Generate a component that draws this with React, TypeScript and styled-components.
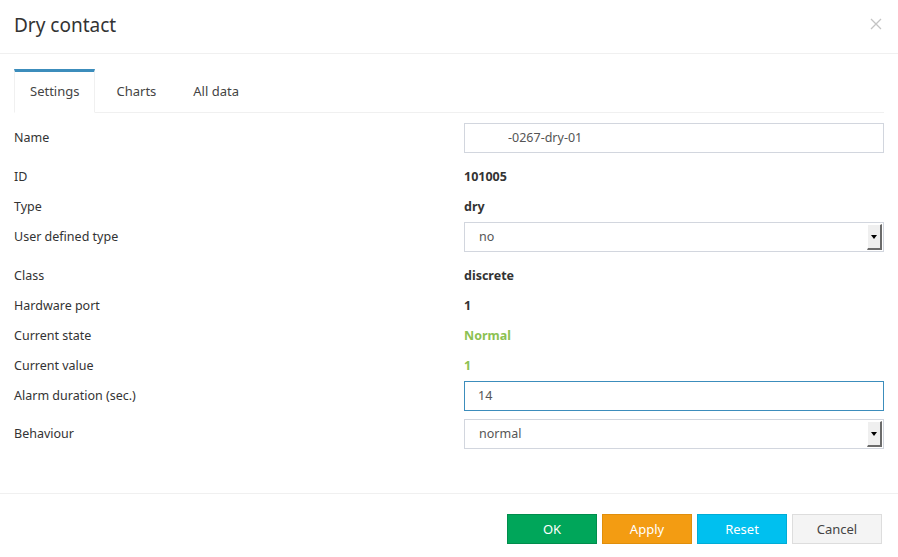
import React from "react";
import styled, { createGlobalStyle } from "styled-components";

const Global = createGlobalStyle`
  html, body { margin: 0; padding: 0; background: #ffffff; }
  body { font-family: "Noto Sans", "Open Sans", sans-serif; color: #333333; }
  * { box-sizing: border-box; }
`;

const Modal = styled.div`
  width: 898px;
  height: 557px;
  background: #ffffff;
  display: flex;
  flex-direction: column;
`;

const Header = styled.div`
  height: 54px;
  border-bottom: 1px solid #f0f0f0;
  padding: 0 16px 0 14px;
  display: flex;
  align-items: center;
  justify-content: space-between;
`;

const Title = styled.h4`
  margin: 0 0 4px 0;
  font-size: 19px;
  font-weight: 400;
  color: #333333;
`;

const Close = styled.button`
  border: 0;
  background: transparent;
  padding: 0;
  width: 12px;
  height: 12px;
  margin-bottom: 6px;
  display: flex;
  cursor: pointer;
`;

const Body = styled.div`
  flex: 1;
  padding: 15px 14px 0 14px;
`;

const TabNav = styled.div`
  display: flex;
  height: 44px;
  border-bottom: 1px solid #f0f0f0;
`;

const Tab = styled.div<{ $active?: boolean }>`
  margin-right: 5px;
  margin-bottom: -1px;
  padding: 0 15px 2px 15px;
  display: flex;
  align-items: center;
  font-size: 13px;
  color: #444444;
  background: ${(p) => (p.$active ? "#ffffff" : "transparent")};
  border: 1px solid ${(p) => (p.$active ? "#f0f0f0" : "transparent")};
  border-top: 3px solid ${(p) => (p.$active ? "#3c8dbc" : "transparent")};
  border-bottom: 1px solid ${(p) => (p.$active ? "#ffffff" : "transparent")};
`;

const Form = styled.div`
  padding-top: 9px;
`;

const Row = styled.div<{ $control?: boolean }>`
  display: grid;
  grid-template-columns: 450px 420px;
  align-items: center;
  height: 30px;
  margin: ${(p) => (p.$control ? "1px 0 8px 0" : "0")};
`;

const Label = styled.div<{ $raised?: boolean }>`
  font-size: 12.5px;
  color: #333333;
  padding-bottom: ${(p) => (p.$raised ? "2px" : "0")};
`;

const Value = styled.div<{ $tone?: "green" }>`
  font-size: 12.5px;
  font-weight: 700;
  color: ${(p) => (p.$tone === "green" ? "#8cc152" : "#333333")};
`;

const TextInput = styled.input<{ $focused?: boolean; $indent?: number }>`
  width: 420px;
  height: 30px;
  border: 1px solid ${(p) => (p.$focused ? "#3c8dbc" : "#d2d6de")};
  padding: 0 0 2px ${(p) => p.$indent ?? 13}px;
  font-family: "Noto Sans", "Open Sans", sans-serif;
  font-size: 12.5px;
  color: #555555;
  outline: none;
  background: #ffffff;
`;

const Select = styled.div`
  width: 420px;
  height: 30px;
  border: 1px solid #d2d6de;
  display: flex;
  align-items: center;
  justify-content: space-between;
  padding: 0 1px 0 14px;
  font-size: 12.5px;
  color: #555555;
`;

const SelectText = styled.span`
  padding-bottom: 2px;
`;

const DropButton = styled.span`
  width: 15px;
  height: 26px;
  background: #efefef;
  border-right: 2px solid #6b6b6b;
  border-bottom: 2px solid #6b6b6b;
  border-top: 1px solid #ffffff;
  border-left: 1px solid #ffffff;
  display: flex;
  align-items: center;
  justify-content: center;
`;

const Arrow = styled.span`
  width: 0;
  height: 0;
  border-left: 3px solid transparent;
  border-right: 3px solid transparent;
  border-top: 4px solid #000000;
`;

const Footer = styled.div`
  height: 64px;
  border-top: 1px solid #f0f0f0;
  padding: 20px 16px 0 0;
  display: flex;
  justify-content: flex-end;
  gap: 5px;
`;

const tones = {
  ok: { bg: "#00a65a", border: "#008d4c", fg: "#ffffff" },
  apply: { bg: "#f39c12", border: "#e08e0b", fg: "#ffffff" },
  reset: { bg: "#00c0ef", border: "#00acd6", fg: "#ffffff" },
  cancel: { bg: "#f4f4f4", border: "#dddddd", fg: "#444444" },
};

const Button = styled.button<{ $tone: keyof typeof tones }>`
  width: 90px;
  height: 30px;
  border: 1px solid ${(p) => tones[p.$tone].border};
  background: ${(p) => tones[p.$tone].bg};
  color: ${(p) => tones[p.$tone].fg};
  font-family: "Noto Sans", "Open Sans", sans-serif;
  font-size: 13px;
  padding: 0 0 1px 0;
  cursor: pointer;
`;

const Dropdown = ({ value }: { value: string }) => (
  <Select>
    <SelectText>{value}</SelectText>
    <DropButton>
      <Arrow />
    </DropButton>
  </Select>
);

export default function App() {
  return (
    <>
      <Global />
      <Modal>
        <Header>
          <Title>Dry contact</Title>
          <Close aria-label="Close">
            <svg width="12" height="12" viewBox="0 0 12 12">
              <path d="M1 1 L11 11 M11 1 L1 11" stroke="#c4c4c4" strokeWidth="1.3" />
            </svg>
          </Close>
        </Header>
        <Body>
          <TabNav>
            <Tab $active>Settings</Tab>
            <Tab>Charts</Tab>
            <Tab>All data</Tab>
          </TabNav>
          <Form>
            <Row $control>
              <Label $raised>Name</Label>
              <TextInput readOnly value="-0267-dry-01" $indent={43} />
            </Row>
            <Row>
              <Label>ID</Label>
              <Value>101005</Value>
            </Row>
            <Row>
              <Label>Type</Label>
              <Value>dry</Value>
            </Row>
            <Row $control>
              <Label $raised>User defined type</Label>
              <Dropdown value="no" />
            </Row>
            <Row>
              <Label>Class</Label>
              <Value>discrete</Value>
            </Row>
            <Row>
              <Label>Hardware port</Label>
              <Value>1</Value>
            </Row>
            <Row>
              <Label>Current state</Label>
              <Value $tone="green">Normal</Value>
            </Row>
            <Row>
              <Label>Current value</Label>
              <Value $tone="green">1</Value>
            </Row>
            <Row $control>
              <Label $raised>Alarm duration (sec.)</Label>
              <TextInput readOnly value="14" $focused />
            </Row>
            <Row $control>
              <Label $raised>Behaviour</Label>
              <Dropdown value="normal" />
            </Row>
          </Form>
        </Body>
        <Footer>
          <Button $tone="ok">OK</Button>
          <Button $tone="apply">Apply</Button>
          <Button $tone="reset">Reset</Button>
          <Button $tone="cancel">Cancel</Button>
        </Footer>
      </Modal>
    </>
  );
}
